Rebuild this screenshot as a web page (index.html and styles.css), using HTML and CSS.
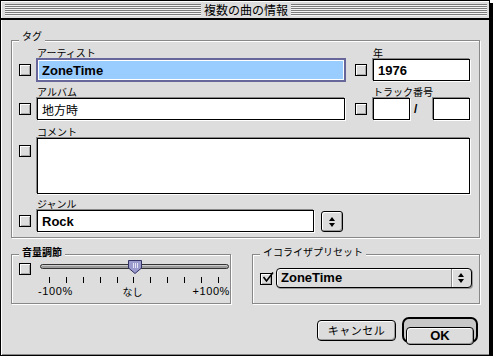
FILE: index.html
```html
<!DOCTYPE html>
<html lang="ja">
<head>
    <meta charset="UTF-8">
    <title>複数の曲の情報</title>
    <link rel="stylesheet" href="styles.css">
</head>
<body>
<div class="window">
    <div class="titlebar">
        <div class="stripes"></div>
        <div class="title">複数の曲の情報</div>
        <div class="stripes"></div>
    </div>

    <div class="content">
        <div class="group tag-group">
            <span class="group-title">タグ</span>

            <div class="row row-1">
                <div class="item item-wide">
                    <label class="lbl">アーティスト</label>
                    <span class="cb"></span>
                    <input class="text text-focus" type="text" value="ZoneTime">
                </div>
                <div class="item">
                    <label class="lbl">年</label>
                    <span class="cb"></span>
                    <input class="text text-year" type="text" value="1976">
                </div>
            </div>

            <div class="row row-2">
                <div class="item item-wide">
                    <label class="lbl">アルバム</label>
                    <span class="cb"></span>
                    <input class="text text-cjk" type="text" value="地方時">
                </div>
                <div class="item">
                    <label class="lbl">トラック番号</label>
                    <span class="cb"></span>
                    <div class="track-no">
                        <input class="text text-track" type="text" value="">
                        <span class="slash">/</span>
                        <input class="text text-track" type="text" value="">
                    </div>
                </div>
            </div>

            <div class="row row-3">
                <div class="item">
                    <label class="lbl">コメント</label>
                    <span class="cb cb-top"></span>
                    <textarea class="text text-comment"></textarea>
                </div>
            </div>

            <div class="row row-4">
                <div class="item">
                    <label class="lbl">ジャンル</label>
                    <span class="cb"></span>
                    <div class="genre">
                        <input class="text text-genre" type="text" value="Rock">
                        <span class="spin">
                            <svg width="20" height="19" viewBox="0 0 20 19">
                                <path d="M10 5 L13 9 L7 9 Z" fill="#000"/>
                                <path d="M7 11 L13 11 L10 15 Z" fill="#000"/>
                            </svg>
                        </span>
                    </div>
                </div>
            </div>
        </div>

        <div class="bottom">
            <div class="group vol-group">
                <span class="group-title group-title-bold">音量調節</span>
                <span class="cb cb-vol"></span>
                <div class="slider-area">
                    <div class="slider">
                        <div class="track"></div>
                        <svg class="thumb" width="14" height="14" viewBox="0 0 14 14">
                            <path d="M0.5 0.5 H13.5 V8 L7 13.5 L0.5 8 Z" fill="#9a9acc" stroke="#333366"/>
                            <path d="M5.5 3 V8 M7.5 3 V8 M9.5 3 V8" stroke="#e4e4f4"/>
                        </svg>
                    </div>
                    <div class="ticks">
                        <i></i><i></i><i></i><i></i><i></i><i></i><i></i><i></i><i></i><i></i><i></i>
                    </div>
                    <div class="scale">
                        <span>-100%</span>
                        <span class="scale-mid">なし</span>
                        <span>+100%</span>
                    </div>
                </div>
            </div>

            <div class="group eq-group">
                <span class="group-title">イコライザプリセット</span>
                <span class="cb cb-checked">
                    <svg width="14" height="14" viewBox="0 0 14 14">
                        <path d="M2.5 6 L5.5 10 L12 1.5" fill="none" stroke="#000" stroke-width="1.6"/>
                    </svg>
                </span>
                <div class="popup">
                    <span class="popup-text">ZoneTime</span>
                    <span class="popup-arrow">
                        <svg width="18" height="18" viewBox="0 0 18 18">
                            <path d="M9 4 L12 8 L6 8 Z" fill="#000"/>
                            <path d="M6 10 L12 10 L9 14 Z" fill="#000"/>
                        </svg>
                    </span>
                </div>
            </div>
        </div>

        <div class="buttons">
            <button class="btn btn-cancel">キャンセル</button>
            <div class="default-ring">
                <button class="btn btn-ok">OK</button>
            </div>
        </div>
    </div>
</div>
</body>
</html>
```

FILE: styles.css
```css
body {
    margin: 0;
    background: #fff;
}
.window {
    width: 490px;
    height: 356px;
    box-sizing: border-box;
    border: 1px solid #000;
    box-shadow: 3px 3px 0 #000;
    background: #dddddd;
    font-family: "Noto Sans CJK JP", sans-serif;
    color: #000;
    display: flex;
    flex-direction: column;
}
.titlebar {
    height: 19px;
    box-sizing: border-box;
    padding: 3px 2px 4px 4px;
    display: flex;
    border-bottom: 2px solid #000;
    box-shadow: inset 1px 1px 0 #fff;
}
.stripes {
    flex: 1;
    height: 12px;
    background: repeating-linear-gradient(to bottom, #7b7b7b 0, #7b7b7b 1px, #f4f4f4 1px, #f4f4f4 2px);
}
.title {
    padding: 0 3px;
    font-size: 12px;
    line-height: 12px;
    white-space: nowrap;
}
.content {
    flex: 1;
    padding: 20px 8px 0 10px;
    box-shadow: inset 1px 0 0 #fff, inset 0 -1px 0 #888;
}
.group {
    position: relative;
    box-sizing: border-box;
    border: 1px solid #888;
    box-shadow: 1px 1px 0 #fff, inset 1px 1px 0 #fff;
}
.group-title {
    position: absolute;
    top: -9px;
    left: 7px;
    padding: 0 3px;
    background: #dddddd;
    font-size: 10px;
    line-height: 12px;
    white-space: nowrap;
}
.group-title-bold {
    font-weight: bold;
}
.tag-group {
    width: 469px;
    height: 198px;
    padding: 6px 0 0 7px;
}
.tag-group .group-title {
    top: -11px;
}
.row {
    display: flex;
}
.row-2 {
    margin-top: 5px;
}
.row-3 {
    margin-top: 6px;
}
.row-4 {
    margin-top: 4px;
}
.item {
    display: grid;
    grid-template-columns: 12px auto;
    column-gap: 6px;
}
.item-wide {
    margin-right: 10px;
}
.lbl {
    grid-column: 2;
    grid-row: 1;
    font-size: 10px;
    line-height: 11px;
    height: 11px;
    margin-bottom: 1px;
    white-space: nowrap;
}
.cb {
    grid-column: 1;
    grid-row: 2;
    align-self: center;
    position: relative;
    width: 12px;
    height: 12px;
    box-sizing: border-box;
    border: 1px solid #000;
    background: #dcdcdc;
    box-shadow: inset 1px 1px 0 #fff, inset -1px -1px 0 #a8a8a8;
}
.cb-top {
    align-self: start;
    margin-top: 7px;
}
.text {
    grid-column: 2;
    grid-row: 2;
    width: 308px;
    height: 22px;
    margin: 0;
    box-sizing: border-box;
    border: 1px solid #000;
    box-shadow: -1px -1px 0 #888, 1px 1px 0 #fff;
    background: #fff;
    padding: 0 4px;
    font-family: "Liberation Sans", sans-serif;
    font-size: 13px;
    font-weight: bold;
    color: #000;
    outline: none;
    border-radius: 0;
}
.text-focus {
    width: 310px;
    height: 24px;
    margin: -1px;
    border: 2px solid #66669a;
    box-shadow: inset 0 0 0 1px #fff;
    background: #99ccff;
}
.text-year {
    width: 97px;
}
.text-cjk {
    font-family: "Noto Sans CJK JP", sans-serif;
    font-size: 12px;
    font-weight: normal;
}
.track-no {
    grid-column: 2;
    grid-row: 2;
    display: flex;
    align-items: center;
}
.text-track {
    width: 37px;
}
.slash {
    width: 23px;
    box-sizing: border-box;
    padding-left: 4px;
    font-family: "Liberation Sans", sans-serif;
    font-size: 12px;
    font-weight: bold;
}
.text-comment {
    width: 433px;
    height: 56px;
    resize: none;
    display: block;
}
.genre {
    grid-column: 2;
    grid-row: 2;
    display: flex;
    align-items: center;
}
.text-genre {
    width: 277px;
}
.spin {
    margin-left: 7px;
    width: 22px;
    height: 21px;
    box-sizing: border-box;
    border: 1px solid #000;
    border-radius: 3px;
    background: #dcdcdc;
    box-shadow: inset 1px 1px 0 #fff, inset -1px -1px 0 #999;
}
.spin svg {
    display: block;
}
.bottom {
    display: flex;
    gap: 21px;
    margin-top: 16px;
}
.vol-group {
    width: 220px;
    height: 50px;
    display: flex;
    align-items: flex-start;
    padding: 5px 0 0 7px;
}
.cb-vol {
    align-self: flex-start;
    margin-top: 3px;
}
.slider-area {
    margin-left: 9px;
    width: 190px;
}
.slider {
    position: relative;
    height: 14px;
}
.track {
    position: relative;
    top: 4px;
    width: 189px;
    height: 5px;
    box-sizing: border-box;
    border: 1px solid #333;
    border-radius: 3px;
    background: #9c9c9c;
    box-shadow: inset 0 1px 0 #ccc;
}
.thumb {
    position: absolute;
    left: 88px;
    top: 0;
}
.ticks {
    display: flex;
    justify-content: space-between;
    width: 170px;
    height: 6px;
    margin: 3px 0 0 9px;
}
.ticks i {
    width: 1px;
    height: 6px;
    background: #000;
}
.scale {
    display: flex;
    justify-content: space-between;
    width: 192px;
    margin: 3px 0 0 -2px;
    font-family: "Liberation Sans", sans-serif;
    font-size: 11px;
    line-height: 11px;
    letter-spacing: 0.6px;
}
.scale-mid {
    font-family: "Noto Sans CJK JP", sans-serif;
    font-size: 10px;
    letter-spacing: 0;
}
.eq-group {
    width: 228px;
    height: 50px;
    display: flex;
    align-items: flex-start;
    padding: 13px 7px 0 7px;
}
.cb-checked {
    align-self: flex-start;
    margin-top: 5px;
}
.cb-checked svg {
    position: absolute;
    left: 0;
    top: -3px;
}
.popup {
    margin-left: 4px;
    width: 196px;
    height: 20px;
    box-sizing: border-box;
    border: 1px solid #000;
    border-radius: 4px;
    display: flex;
    background: #dcdcdc;
    box-shadow: inset 1px 1px 0 #fff, 1px 1px 0 #999;
}
.popup-text {
    flex: 1;
    padding-left: 4px;
    font-family: "Liberation Sans", sans-serif;
    font-size: 13px;
    font-weight: bold;
    line-height: 18px;
}
.popup-arrow {
    width: 19px;
    border-left: 1px solid #888;
    box-shadow: inset 1px 0 0 #fff;
}
.popup-arrow svg {
    display: block;
}
.buttons {
    display: flex;
    justify-content: flex-end;
    align-items: center;
    gap: 6px;
    margin-top: 13px;
    padding-right: 3px;
}
.btn {
    margin: 0;
    padding: 0;
    box-sizing: border-box;
    border: 1px solid #000;
    border-radius: 4px;
    background: #dcdcdc;
    box-shadow: inset 1px 1px 0 #fff, inset -1px -1px 0 #999;
    color: #000;
    cursor: pointer;
}
.btn-cancel {
    width: 79px;
    height: 21px;
    font-family: "Noto Sans CJK JP", sans-serif;
    font-size: 11px;
    letter-spacing: 0.5px;
}
.default-ring {
    width: 76px;
    height: 26px;
    box-sizing: border-box;
    border: 2px solid #000;
    border-radius: 7px;
    padding: 2px;
    background: #c8c8c8;
}
.btn-ok {
    width: 100%;
    height: 100%;
    font-family: "Liberation Sans", sans-serif;
    font-size: 13px;
    font-weight: bold;
}
```
